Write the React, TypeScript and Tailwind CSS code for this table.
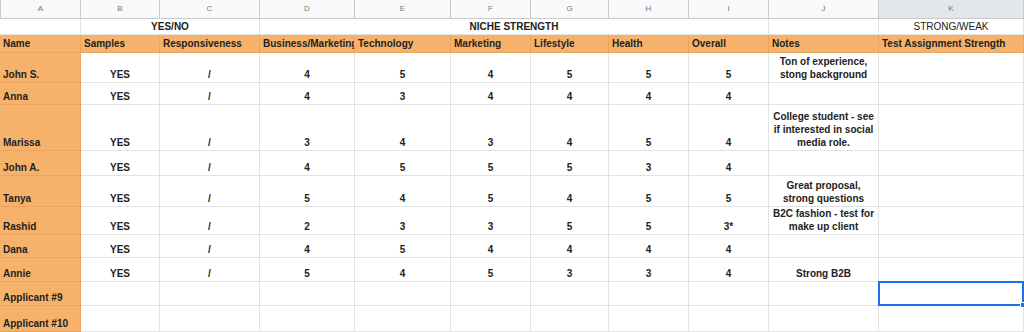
import React from 'react';

type Applicant = {
  name: string;
  height: string;
  scores: (number | string)[];
  note?: string[];
};

// column widths A..K, shared by every row
const cols = 'grid grid-cols-[81px_79px_100px_95px_96px_80px_78px_80px_80px_110px_145px]';

const letters = ['A', 'B', 'C', 'D', 'E', 'F', 'G', 'H', 'I', 'J', 'K'];

const applicants: Applicant[] = [
  { name: 'John S.', height: 'h-[30px]', scores: [4, 5, 4, 5, 5, 5], note: ['Ton of experience,', 'stong background'] },
  { name: 'Anna', height: 'h-[22px]', scores: [4, 3, 4, 4, 4, 4] },
  {
    name: 'Marissa',
    height: 'h-[46px]',
    scores: [3, 4, 3, 4, 5, 4],
    note: ['College student - see', 'if interested in social', 'media role.'],
  },
  { name: 'John A.', height: 'h-[25px]', scores: [4, 5, 5, 5, 3, 4] },
  { name: 'Tanya', height: 'h-[31px]', scores: [5, 4, 5, 4, 5, 5], note: ['Great proposal,', 'strong questions'] },
  { name: 'Rashid', height: 'h-[28px]', scores: [2, 3, 3, 5, 5, '3*'], note: ['B2C fashion - test for', 'make up client'] },
  { name: 'Dana', height: 'h-[23px]', scores: [4, 5, 4, 4, 4, 4] },
  { name: 'Annie', height: 'h-[24px]', scores: [5, 4, 5, 3, 3, 4], note: ['Strong B2B'] },
];

const Cell = ({ className = '', children }: { className?: string; children?: React.ReactNode }) => (
  <div
    className={`flex items-end overflow-hidden whitespace-nowrap border-r border-b border-[#e2e3e3] px-[3px] pb-[1px] ${className}`}
  >
    {children}
  </div>
);

const NameCell = ({ children }: { children?: React.ReactNode }) => (
  <Cell className="bg-[#f6b26b] border-[#eaa660]">{children}</Cell>
);

const App = () => {
  return (
    <div className="w-[1024px] h-[332px] overflow-hidden bg-white font-['Liberation_Sans',Arial,sans-serif] text-[10px] font-bold leading-[12px] text-[#222]">
      {/* column letters */}
      <div className={`${cols} h-[19px]`}>
        {letters.map((l, i) => (
          <div
            key={l}
            className={`flex items-center justify-center border-r border-b border-[#c7c9cc] text-[8px] font-normal text-[#777] ${
              i === 0 ? 'border-l' : ''
            } ${l === 'K' ? 'bg-[#e3e6ea]' : 'bg-[#f8f9fa]'}`}
          >
            {l}
          </div>
        ))}
      </div>

      {/* group titles */}
      <div className={`${cols} h-[16px]`}>
        <Cell />
        <Cell className="col-span-2 justify-center">YES/NO</Cell>
        <Cell className="col-span-6 justify-center">NICHE STRENGTH</Cell>
        <Cell />
        <Cell className="justify-center font-normal">STRONG/WEAK</Cell>
      </div>

      {/* field names */}
      <div className={`${cols} h-[18px] bg-[#f6b26b]`}>
        {[
          'Name',
          'Samples',
          'Responsiveness',
          'Business/Marketing',
          'Technology',
          'Marketing',
          'Lifestyle',
          'Health',
          'Overall',
          'Notes',
          'Test Assignment Strength',
        ].map((h) => (
          <Cell key={h} className="border-[#eaa660] pb-[2px]">
            {h}
          </Cell>
        ))}
      </div>

      {applicants.map((a) => (
        <div key={a.name} className={`${cols} ${a.height}`}>
          <NameCell>{a.name}</NameCell>
          <Cell className="justify-center">YES</Cell>
          <Cell className="justify-center">/</Cell>
          {a.scores.map((s, i) => (
            <Cell key={i} className="justify-center">
              {s}
            </Cell>
          ))}
          <Cell className="justify-center">
            {a.note && (
              <div className="text-center leading-[13px]">
                {a.note.map((line) => (
                  <div key={line}>{line}</div>
                ))}
              </div>
            )}
          </Cell>
          <Cell />
        </div>
      ))}

      {['Applicant #9', 'Applicant #10'].map((name, r) => (
        <div key={name} className={`${cols} ${r === 0 ? 'h-[24px]' : 'h-[26px]'}`}>
          <NameCell>{name}</NameCell>
          {letters.slice(1).map((l) =>
            r === 0 && l === 'K' ? (
              <div key={l} className="relative border-r border-b border-[#e2e3e3]">
                {/* active cell outline + fill handle */}
                <div className="absolute -top-px -left-px right-[-1px] bottom-[-1px] border-2 border-[#1a73e8]" />
                <div className="absolute right-[-3px] bottom-[-3px] h-[6px] w-[6px] border border-white bg-[#1a73e8]" />
              </div>
            ) : (
              <Cell key={l} />
            )
          )}
        </div>
      ))}
    </div>
  );
};

export default App;
